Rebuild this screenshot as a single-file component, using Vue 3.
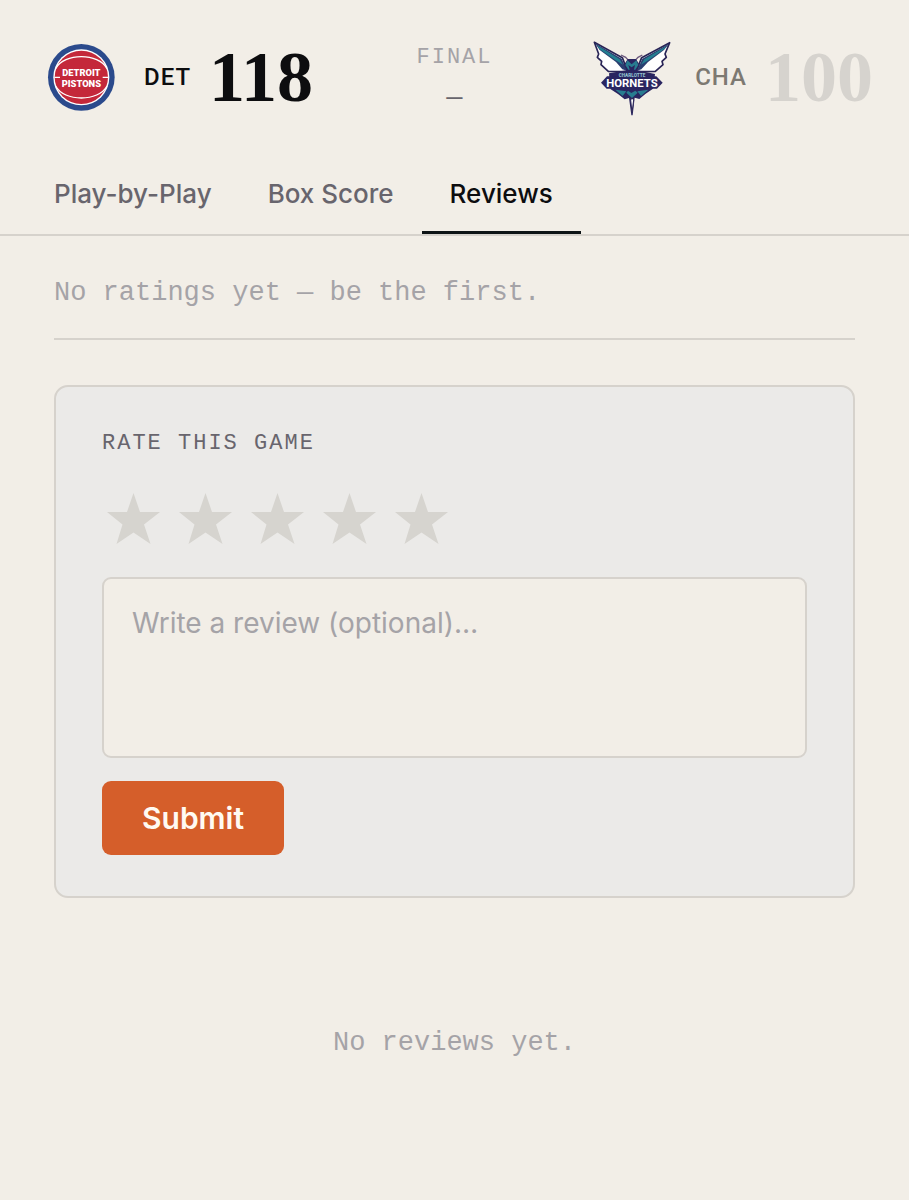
<script setup>
import { ref } from 'vue'

const tabs = ['Play-by-Play', 'Box Score', 'Reviews']
const active = ref('Reviews')
const rating = ref(0)
const review = ref('')
</script>

<template>
  <main class="page">
    <header class="score">
      <div class="team">
        <svg class="logo" viewBox="-12 6 270 270" role="img" aria-label="Detroit Pistons">
          <circle cx="124" cy="142" r="100" fill="#2b4a8c" />
          <circle cx="124" cy="142" r="84" fill="#fff" />
          <circle cx="124" cy="142" r="80" fill="#c4283a" />
          <g fill="none" stroke="#fff" stroke-width="4">
            <path d="M47 116C72 68 176 68 201 116" />
            <path d="M47 168C72 216 176 216 201 168" />
            <path d="M43 142H60M188 142H205" />
          </g>
          <g class="det-word">
            <text x="124" y="138">DETROIT</text>
            <text x="124" y="170">PISTONS</text>
          </g>
        </svg>
        <span class="code">DET</span>
        <span class="points">118</span>
      </div>
      <div class="status">
        <span class="state">FINAL</span>
        <span class="clock">–</span>
      </div>
      <div class="team away">
        <svg class="logo" viewBox="6 6 270 270" role="img" aria-label="Charlotte Hornets">
          <g stroke="#292456" stroke-width="5" stroke-linejoin="round">
            <path d="M28 37L112 83L128 125L70 124L48 104L50 94L37 82L41 72Z" fill="#fff" />
            <path d="M254 38L170 83L153 125L211 124L234 104L231 94L244 82L240 72Z" fill="#fff" />
          </g>
          <path d="M30 40L110 86L126 122L112 118L93 96L44 60ZM252 41L172 86L156 122L169 118L189 96L237 60Z" fill="#2a3f70" />
          <path d="M36 46L104 88L114 104L92 91L44 58ZM246 47L178 88L168 104L190 91L237 58Z" fill="#237f91" />
          <path d="M108 75L122 82L131 92M172 75L159 82L150 92" fill="none" stroke="#6b577c" stroke-width="4" />
          <path d="M128 87H153L164 105L157 121L210 132L204 176L181 192L163 207L149 203L143 256H139L132 204L119 208L99 192L76 177L72 130L124 121L117 105Z" fill="#2a2560" />
          <path d="M127 91L140 103L154 91L160 105L151 119H130L121 105Z" fill="#287c90" />
          <path d="M130 105L140 112L150 105L146 122H135Z" fill="#2a2560" />
          <path d="M91 179L124 184L113 198ZM190 179L157 184L168 198ZM129 182L139 189L151 182L158 188L141 204L124 188Z" fill="#287c90" />
          <path d="M137 210L141 248L146 210L141 204Z" fill="#fff" stroke="#292456" stroke-width="3" />
          <path d="M48 158L66 139H214L233 158L216 176H65Z" fill="#2a2560" />
          <text class="cha-small" x="141" y="140">CHARLOTTE</text>
          <text class="cha-word" x="141" y="170">HORNETS</text>
        </svg>
        <span class="code">CHA</span>
        <span class="points">100</span>
      </div>
    </header>

    <nav class="tabs" aria-label="Game details">
      <button
        v-for="tab in tabs"
        :key="tab"
        type="button"
        class="tab"
        :class="{ selected: active === tab }"
        @click="active = tab"
      >{{ tab }}</button>
    </nav>

    <section class="content">
      <p class="summary">No ratings yet — be the first.</p>

      <form class="card" @submit.prevent>
        <h2 class="heading">RATE THIS GAME</h2>
        <div class="stars">
          <button
            v-for="n in 5"
            :key="n"
            type="button"
            class="star"
            :class="{ filled: n <= rating }"
            :aria-label="`Rate ${n} of 5`"
            @click="rating = n"
          >
            <svg viewBox="0 0 53 51" aria-hidden="true">
              <path d="M26.5 0L33 19H53L37 31.5L43.5 51L26.5 39.5L9.5 51L15.5 31.5L0 19H20Z" />
            </svg>
          </button>
        </div>
        <textarea v-model="review" class="review" aria-label="Review" placeholder="Write a review (optional)…"></textarea>
        <button type="submit" class="submit">Submit</button>
      </form>

      <p class="empty">No reviews yet.</p>
    </section>
  </main>
</template>

<style>
body {
  background: #f2eee7;
}
</style>

<style scoped>
.page {
  min-height: 100vh;
  background: #f2eee7;
  color: #0d0d0f;
  font-family: Inter, "Liberation Sans", sans-serif;
}
.score {
  display: grid;
  grid-template-columns: 1fr auto 1fr;
  align-items: center;
  padding: 32px 36px;
}
.team {
  display: flex;
  align-items: center;
  gap: 18px;
}
.away {
  justify-content: flex-end;
}
.logo {
  width: 90px;
  height: 90px;
  flex: none;
}
.det-word,
.cha-small,
.cha-word {
  fill: #fff;
  font-family: Roboto, sans-serif;
  font-weight: 900;
  text-anchor: middle;
}
.det-word {
  font-size: 28px;
}
.cha-small {
  font-size: 14px;
  fill: #8fbfce;
}
.cha-word {
  font-size: 34px;
  font-weight: 700;
}
.code {
  font: 500 24px/32px Roboto, sans-serif;
  letter-spacing: 1px;
}
.points {
  font: 700 72px/80px "Liberation Serif", serif;
}
.away .code {
  color: #7d7972;
}
.away .points {
  color: #d6d3ce;
}
.status {
  display: flex;
  flex-direction: column;
  align-items: center;
  gap: 6px;
  font-family: "Liberation Mono", monospace;
}
.state {
  color: #a5a3a7;
  font-size: 22px;
  line-height: 32px;
  letter-spacing: 2px;
}
.clock {
  color: #68656d;
  font: 27px/32px "DejaVu Sans Mono", monospace;
}
.tabs {
  display: flex;
  padding: 0 26px;
  border-bottom: 2px solid #d6d2cc;
}
.tab {
  padding: 22px 28px 19px;
  border: 0;
  border-bottom: 3px solid transparent;
  background: none;
  color: #68656d;
  font: 500 26px/36px Inter, "Liberation Sans", sans-serif;
  cursor: pointer;
}
.tab.selected {
  border-color: #0d1416;
  color: #0d0d0f;
}
.content {
  padding: 37px 54px;
}
.summary,
.empty {
  margin: 0;
  color: #a5a3a7;
  font: 27px/40px "Liberation Mono", monospace;
}
.summary {
  padding-bottom: 25px;
  border-bottom: 2px solid #d6d2cc;
}
.card {
  display: flex;
  flex-direction: column;
  align-items: flex-start;
  margin-top: 45px;
  padding: 41px 46px;
  border: 2px solid #d6d2cc;
  border-radius: 14px;
  background: #ebeae8;
}
.heading {
  margin: 0;
  color: #68656d;
  font: 400 22px/32px "Liberation Mono", monospace;
  letter-spacing: 2px;
}
.stars {
  display: flex;
  gap: 9px;
  margin: 23px 0;
}
.star {
  display: flex;
  justify-content: center;
  padding: 10px 5px;
  border: 0;
  background: none;
  cursor: pointer;
}
.star svg {
  width: 53px;
  height: 51px;
  fill: #d6d4cf;
}
.star.filled svg {
  fill: #d55e2a;
}
.review {
  box-sizing: border-box;
  width: 100%;
  height: 181px;
  padding: 24px 28px;
  border: 2px solid #d6d2cc;
  border-radius: 9px;
  background: #f2eee7;
  color: #0d0d0f;
  font: 400 28px/40px Inter, "Liberation Sans", sans-serif;
  resize: none;
}
.review::placeholder {
  color: #a5a3a7;
  opacity: 1;
}
.submit {
  margin-top: 23px;
  padding: 17px 40px;
  border: 0;
  border-radius: 9px;
  background: #d55e2a;
  color: #fffaf2;
  font: 600 30px/40px Inter, "Liberation Sans", sans-serif;
  cursor: pointer;
}
.empty {
  padding: 125px 0;
  text-align: center;
}
</style>
